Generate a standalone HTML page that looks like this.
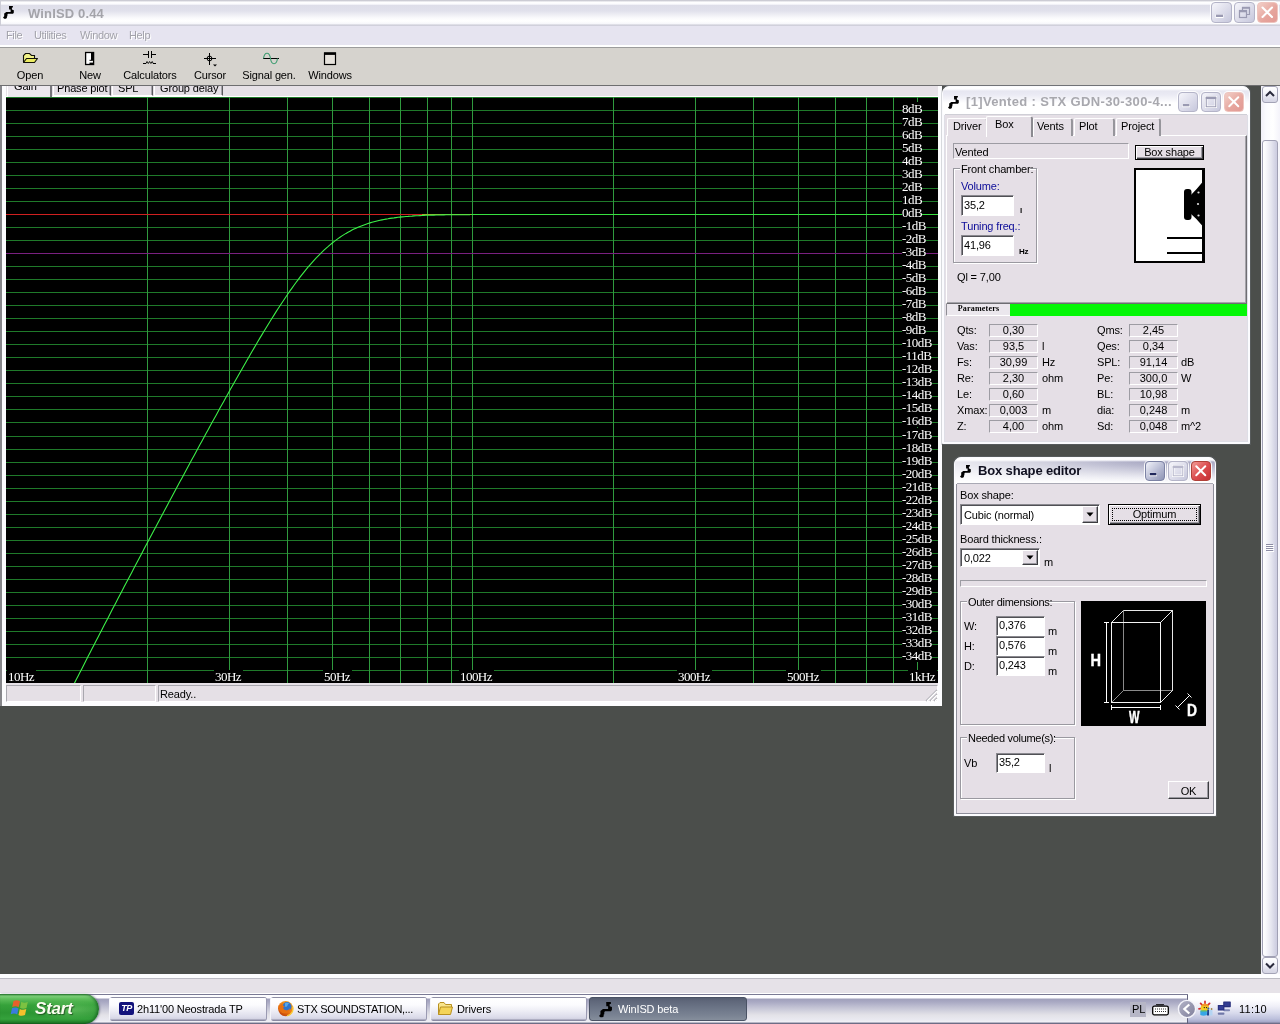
<!DOCTYPE html>
<html><head><meta charset="utf-8"><title>WinISD</title>
<style>
*{box-sizing:border-box;margin:0;padding:0}
html,body{width:1280px;height:1024px;overflow:hidden;background:#4b4e4b;font-family:"Liberation Sans",sans-serif;font-size:11px;color:#000}
#root{position:absolute;left:0;top:0;width:1280px;height:1024px;will-change:transform;transform:translateZ(0)}
.a{position:absolute}
.t{white-space:nowrap;line-height:13px;letter-spacing:-0.15px}
.s{font-family:"Liberation Serif",serif}
.gl{font-size:13px;color:#fff;background:#000;letter-spacing:-0.55px;line-height:13px;height:13px}
</style></head><body><div id="root">
<div class="a " style="left:0px;top:0px;width:1280px;height:26px;border-left:1px solid #cdcdd6;background:linear-gradient(#c4c4cc 0,#d4d4dc 1px,#ffffff 2px,#fbfbfe 4px,#dedee9 5.5px,#e1e1ec 11px,#efeff5 15px,#fafafc 18px,#ffffff 21px,#f6f6fa 24px,#c9c9d4 25px,#d8d7e2 26px)"></div>
<svg class="a" style="left:3px;top:6px" width="11.0" height="13.0" viewBox="0 0 11 13"><path d="M6 0H9.900V1.600H8.900V3.600L10.800 4.200V6.700L10 7.800H5L4.400 8.600V10.200L3.900 10.400V12L2.800 12.800H1.200L0 11.600L1.200 10.200V7.600L3.300 5.900H7.600V3.600H6.100Z" fill="#000"/></svg>
<div class="a t " style="left:28px;top:7px;font-weight:bold;font-size:13px;color:#a4a4aa;letter-spacing:0.15px">WinISD 0.44</div>
<div class="a " style="left:1211px;top:2px;width:21px;height:21px;background:linear-gradient(135deg,#f6f6fb,#dcdcea 55%,#c6c7dc);border:1px solid #b4b4c8;border-radius:4px;box-shadow:0 0 0 1px rgba(255,255,255,.9)"></div>
<svg class="a" style="left:1211px;top:2px" width="21" height="21" viewBox="0 0 21 21"><rect x="4.5" y="12.5" width="8" height="3.5" fill="#fff"/><rect x="5" y="12.6" width="7" height="2.4" fill="#9a9ab2"/></svg>
<div class="a " style="left:1234px;top:2px;width:21px;height:21px;background:linear-gradient(135deg,#f6f6fb,#dcdcea 55%,#c6c7dc);border:1px solid #b4b4c8;border-radius:4px;box-shadow:0 0 0 1px rgba(255,255,255,.9)"></div>
<svg class="a" style="left:1234px;top:2px" width="21" height="21" viewBox="0 0 21 21"><g fill="none" stroke="#9a9ab2" stroke-width="1.2"><path d="M8.5 8.5v-3h7v7h-3" /><path d="M8 5.8h8" stroke-width="2"/><rect x="5.5" y="8.5" width="7" height="7"/><path d="M5 9.3h8" stroke-width="2"/></g></svg>
<div class="a " style="left:1257px;top:2px;width:21px;height:21px;background:linear-gradient(135deg,#f2cfc8,#e6a49c 60%,#e29a94);border:1px solid #eec4be;border-radius:4px;box-shadow:0 0 0 1px rgba(255,255,255,.9)"></div>
<svg class="a" style="left:1257px;top:2px" width="21" height="21" viewBox="0 0 21 21"><path d="M5.5 5.5L15 15M15 5.5L5.5 15" stroke="#fff" stroke-width="2.1" stroke-linecap="round"/></svg>
<div class="a " style="left:0px;top:26px;width:1280px;height:20px;background:#e6e4f0"></div>
<div class="a t " style="left:6px;top:29px;color:#a2a2aa;text-shadow:1px 1px 0 #fff;letter-spacing:-0.35px">File</div>
<div class="a t " style="left:34px;top:29px;color:#a2a2aa;text-shadow:1px 1px 0 #fff;letter-spacing:-0.35px">Utilities</div>
<div class="a t " style="left:80px;top:29px;color:#a2a2aa;text-shadow:1px 1px 0 #fff;letter-spacing:-0.35px">Window</div>
<div class="a t " style="left:129px;top:29px;color:#a2a2aa;text-shadow:1px 1px 0 #fff;letter-spacing:-0.35px">Help</div>
<div class="a " style="left:0px;top:45px;width:1280px;height:2px;background:#fff"></div>
<div class="a " style="left:0px;top:47px;width:1280px;height:1px;background:#9c9c9c"></div>
<div class="a " style="left:0px;top:85px;width:1261px;height:889px;background:#4b4e4b"></div>
<div class="a " style="left:1261px;top:85px;width:19px;height:889px;background:linear-gradient(90deg,#f1f0f8 0,#fbfbfe 5px,#ffffff 12px,#f4f3fa 19px)"></div>
<div class="a " style="left:1262px;top:86px;width:16px;height:17px;background:linear-gradient(#ffffff 0,#f4f4fa 6px,#dcdce9 12px,#d0d0e0 17px);border:1px solid #a3a3b6;border-radius:3px"></div>
<svg class="a" style="left:1262px;top:86px" width="16" height="17" viewBox="0 0 16 17"><path d="M4 10L8 6l4 4" fill="none" stroke="#2a2a3c" stroke-width="2"/></svg>
<div class="a " style="left:1262px;top:957px;width:16px;height:17px;background:linear-gradient(#ffffff 0,#f4f4fa 6px,#dcdce9 12px,#d0d0e0 17px);border:1px solid #a3a3b6;border-radius:3px"></div>
<svg class="a" style="left:1262px;top:957px" width="16" height="17" viewBox="0 0 16 17"><path d="M4 6.500L8 10.500l4-4" fill="none" stroke="#2a2a3c" stroke-width="2"/></svg>
<div class="a " style="left:1262px;top:140px;width:16px;height:817px;background:linear-gradient(90deg,#ffffff 0,#f8f8fc 3px,#e6e6f0 8px,#cfcfe2 13px,#c6c6dc 16px);border:1px solid #a0a0b4;border-radius:3px"></div>
<svg class="a" style="left:1266px;top:544px" width="8" height="8" viewBox="0 0 8 8"><path d="M0 0.500h7M0 2.500h7M0 4.500h7M0 6.500h7" stroke="#8c8ca4" stroke-width="1" shape-rendering="crispEdges"/><path d="M1 1.500h7M1 3.500h7M1 5.500h7M1 7.500h7" stroke="#fff" stroke-width="1" shape-rendering="crispEdges"/></svg>
<div class="a " style="left:0px;top:974px;width:1280px;height:20px;background:#e6e2e8"></div>
<div class="a " style="left:0px;top:974px;width:1280px;height:4px;background:#fdfdff"></div>
<div class="a " style="left:0px;top:978px;width:1280px;height:1px;background:#bcbbc4"></div>
<div class="a " style="left:0px;top:993px;width:1280px;height:1px;background:#f6f6fa"></div>
<div class="a " style="left:0px;top:85px;width:2px;height:621px;background:#86868a"></div>
<div class="a " style="left:2px;top:85px;width:940px;height:621px;background:#fcfcfe"></div>
<div class="a " style="left:6px;top:85px;width:932px;height:617px;background:#e6e1e7"></div>
<div class="a " style="left:6px;top:96px;width:932px;height:1px;background:#fff"></div>
<div class="a " style="left:7px;top:83px;width:45px;height:14px;background:#ece8ee;border-left:1px solid #fff;border-right:2px solid #77777c"></div>
<div class="a t " style="left:14px;top:80px;">Gain</div>
<div class="a " style="left:53px;top:83px;width:58px;height:13px;background:#e5e0e6;border-left:1px solid #fff;border-right:1px solid #5a5a5e;border-bottom:1px solid #fff;box-shadow:inset -1px 0 0 #a5a4aa"></div>
<div class="a t " style="left:57px;top:82px;">Phase plot</div>
<div class="a " style="left:112px;top:83px;width:41px;height:13px;background:#e5e0e6;border-left:1px solid #fff;border-right:1px solid #5a5a5e;border-bottom:1px solid #fff;box-shadow:inset -1px 0 0 #a5a4aa"></div>
<div class="a t " style="left:118px;top:82px;">SPL</div>
<div class="a " style="left:154px;top:83px;width:69px;height:13px;background:#e5e0e6;border-left:1px solid #fff;border-right:1px solid #5a5a5e;border-bottom:1px solid #fff;box-shadow:inset -1px 0 0 #a5a4aa"></div>
<div class="a t " style="left:160px;top:82px;">Group delay</div>
<div class="a " style="left:6px;top:97px;width:932px;height:586px;background:#000"></div>
<div class="a " style="left:6px;top:685px;width:75px;height:17px;background:#e5e0e6;border-top:1px solid #a8a7ae;border-left:1px solid #a8a7ae;border-right:1px solid #fff;border-bottom:1px solid #fff"></div>
<div class="a " style="left:83px;top:685px;width:73px;height:17px;background:#e5e0e6;border-top:1px solid #a8a7ae;border-left:1px solid #a8a7ae;border-right:1px solid #fff;border-bottom:1px solid #fff"></div>
<div class="a " style="left:158px;top:685px;width:780px;height:17px;background:#e5e0e6;border-top:1px solid #a8a7ae;border-left:1px solid #a8a7ae;border-right:1px solid #fff;border-bottom:1px solid #fff"></div>
<div class="a t " style="left:160px;top:688px;">Ready..</div>
<svg class="a" style="left:924px;top:688px" width="14" height="14" viewBox="0 0 14 14"><g stroke-width="1.2"><path d="M13 2L2 13M13 6L6 13M13 10L10 13" stroke="#a0a0a8"/><path d="M13 3L3 13M13 7L7 13M13 11L11 13" stroke="#fff"/></g></svg>
<svg class="a" style="left:0;top:0" width="1280" height="700" viewBox="0 0 1280 700"><g shape-rendering="crispEdges" stroke-width="1"><line x1="6" x2="938" y1="97.5" y2="97.5" stroke="#1f7a2a"/><line x1="6" x2="938" y1="110.5" y2="110.5" stroke="#1f7a2a"/><line x1="6" x2="938" y1="123.5" y2="123.5" stroke="#1f7a2a"/><line x1="6" x2="938" y1="136.5" y2="136.5" stroke="#1f7a2a"/><line x1="6" x2="938" y1="149.5" y2="149.5" stroke="#1f7a2a"/><line x1="6" x2="938" y1="162.5" y2="162.5" stroke="#1f7a2a"/><line x1="6" x2="938" y1="175.5" y2="175.5" stroke="#1f7a2a"/><line x1="6" x2="938" y1="188.5" y2="188.5" stroke="#1f7a2a"/><line x1="6" x2="938" y1="201.5" y2="201.5" stroke="#1f7a2a"/><line x1="6" x2="938" y1="214.5" y2="214.5" stroke="#1f7a2a"/><line x1="6" x2="938" y1="227.5" y2="227.5" stroke="#1f7a2a"/><line x1="6" x2="938" y1="240.5" y2="240.5" stroke="#1f7a2a"/><line x1="6" x2="938" y1="253.5" y2="253.5" stroke="#1f7a2a"/><line x1="6" x2="938" y1="266.5" y2="266.5" stroke="#1f7a2a"/><line x1="6" x2="938" y1="279.5" y2="279.5" stroke="#1f7a2a"/><line x1="6" x2="938" y1="292.5" y2="292.5" stroke="#1f7a2a"/><line x1="6" x2="938" y1="305.5" y2="305.5" stroke="#1f7a2a"/><line x1="6" x2="938" y1="318.5" y2="318.5" stroke="#1f7a2a"/><line x1="6" x2="938" y1="331.5" y2="331.5" stroke="#1f7a2a"/><line x1="6" x2="938" y1="344.5" y2="344.5" stroke="#1f7a2a"/><line x1="6" x2="938" y1="357.5" y2="357.5" stroke="#1f7a2a"/><line x1="6" x2="938" y1="370.5" y2="370.5" stroke="#1f7a2a"/><line x1="6" x2="938" y1="383.5" y2="383.5" stroke="#1f7a2a"/><line x1="6" x2="938" y1="396.5" y2="396.5" stroke="#1f7a2a"/><line x1="6" x2="938" y1="409.5" y2="409.5" stroke="#1f7a2a"/><line x1="6" x2="938" y1="422.5" y2="422.5" stroke="#1f7a2a"/><line x1="6" x2="938" y1="436.5" y2="436.5" stroke="#1f7a2a"/><line x1="6" x2="938" y1="449.5" y2="449.5" stroke="#1f7a2a"/><line x1="6" x2="938" y1="462.5" y2="462.5" stroke="#1f7a2a"/><line x1="6" x2="938" y1="475.5" y2="475.5" stroke="#1f7a2a"/><line x1="6" x2="938" y1="488.5" y2="488.5" stroke="#1f7a2a"/><line x1="6" x2="938" y1="501.5" y2="501.5" stroke="#1f7a2a"/><line x1="6" x2="938" y1="514.5" y2="514.5" stroke="#1f7a2a"/><line x1="6" x2="938" y1="527.5" y2="527.5" stroke="#1f7a2a"/><line x1="6" x2="938" y1="540.5" y2="540.5" stroke="#1f7a2a"/><line x1="6" x2="938" y1="553.5" y2="553.5" stroke="#1f7a2a"/><line x1="6" x2="938" y1="566.5" y2="566.5" stroke="#1f7a2a"/><line x1="6" x2="938" y1="579.5" y2="579.5" stroke="#1f7a2a"/><line x1="6" x2="938" y1="592.5" y2="592.5" stroke="#1f7a2a"/><line x1="6" x2="938" y1="605.5" y2="605.5" stroke="#1f7a2a"/><line x1="6" x2="938" y1="618.5" y2="618.5" stroke="#1f7a2a"/><line x1="6" x2="938" y1="631.5" y2="631.5" stroke="#1f7a2a"/><line x1="6" x2="938" y1="644.5" y2="644.5" stroke="#1f7a2a"/><line x1="6" x2="938" y1="657.5" y2="657.5" stroke="#1f7a2a"/><line x1="6" x2="938" y1="670.5" y2="670.5" stroke="#1f7a2a"/><line x1="147.5" x2="147.5" y1="97" y2="683" stroke="#2f9a3e"/><line x1="229.5" x2="229.5" y1="97" y2="683" stroke="#2f9a3e"/><line x1="287.5" x2="287.5" y1="97" y2="683" stroke="#2f9a3e"/><line x1="332.5" x2="332.5" y1="97" y2="683" stroke="#2f9a3e"/><line x1="369.5" x2="369.5" y1="97" y2="683" stroke="#2f9a3e"/><line x1="400.5" x2="400.5" y1="97" y2="683" stroke="#2f9a3e"/><line x1="427.5" x2="427.5" y1="97" y2="683" stroke="#2f9a3e"/><line x1="451.5" x2="451.5" y1="97" y2="683" stroke="#2f9a3e"/><line x1="472.5" x2="472.5" y1="97" y2="683" stroke="#2f9a3e"/><line x1="613.5" x2="613.5" y1="97" y2="683" stroke="#2f9a3e"/><line x1="695.5" x2="695.5" y1="97" y2="683" stroke="#2f9a3e"/><line x1="753.5" x2="753.5" y1="97" y2="683" stroke="#2f9a3e"/><line x1="798.5" x2="798.5" y1="97" y2="683" stroke="#2f9a3e"/><line x1="835.5" x2="835.5" y1="97" y2="683" stroke="#2f9a3e"/><line x1="866.5" x2="866.5" y1="97" y2="683" stroke="#2f9a3e"/><line x1="893.5" x2="893.5" y1="97" y2="683" stroke="#2f9a3e"/><line x1="917.5" x2="917.5" y1="97" y2="683" stroke="#2f9a3e"/><line x1="6" x2="938" y1="253.5" y2="253.5" stroke="#7a2080"/><line x1="6" x2="422" y1="214.5" y2="214.5" stroke="#d02020"/><line x1="422" x2="471" y1="214.5" y2="214.5" stroke="#b0a828"/><line x1="471" x2="938" y1="214.5" y2="214.5" stroke="#38e040"/></g><clipPath id="pc"><rect x="6" y="97" width="932" height="586"/></clipPath><polyline clip-path="url(#pc)" fill="none" stroke="#3cf048" stroke-width="1.1" points="66.0,699.8 68.0,695.9 70.0,692.0 72.0,688.0 74.0,684.1 76.0,680.1 78.0,676.2 80.0,672.3 82.0,668.4 84.0,664.5 86.0,660.5 88.0,656.6 90.0,652.7 92.0,648.8 94.0,645.0 96.0,641.1 98.0,637.2 100.0,633.3 102.0,629.4 104.0,625.6 106.0,621.7 108.0,617.9 110.0,614.0 112.0,610.1 114.0,606.3 116.0,602.5 118.0,598.6 120.0,594.8 122.0,591.0 124.0,587.1 126.0,583.3 128.0,579.5 130.0,575.7 132.0,571.9 134.0,568.1 136.0,564.3 138.0,560.5 140.0,556.7 142.0,552.9 144.0,549.1 146.0,545.3 148.0,541.5 150.0,537.8 152.0,534.0 154.0,530.2 156.0,526.5 158.0,522.7 160.0,518.9 162.0,515.2 164.0,511.4 166.0,507.7 168.0,504.0 170.0,500.2 172.0,496.5 174.0,492.8 176.0,489.0 178.0,485.3 180.0,481.6 182.0,477.9 184.0,474.2 186.0,470.4 188.0,466.7 190.0,463.0 192.0,459.3 194.0,455.7 196.0,452.0 198.0,448.3 200.0,444.6 202.0,440.9 204.0,437.3 206.0,433.6 208.0,429.9 210.0,426.3 212.0,422.6 214.0,419.0 216.0,415.4 218.0,411.7 220.0,408.1 222.0,404.5 224.0,400.9 226.0,397.3 228.0,393.7 230.0,390.1 232.0,386.6 234.0,383.0 236.0,379.4 238.0,375.9 240.0,372.4 242.0,368.9 244.0,365.4 246.0,361.9 248.0,358.4 250.0,354.9 252.0,351.5 254.0,348.1 256.0,344.7 258.0,341.3 260.0,337.9 262.0,334.6 264.0,331.3 266.0,328.0 268.0,324.7 270.0,321.5 272.0,318.2 274.0,315.1 276.0,311.9 278.0,308.8 280.0,305.7 282.0,302.7 284.0,299.7 286.0,296.7 288.0,293.8 290.0,290.9 292.0,288.1 294.0,285.3 296.0,282.5 298.0,279.9 300.0,277.2 302.0,274.6 304.0,272.1 306.0,269.6 308.0,267.2 310.0,264.9 312.0,262.6 314.0,260.4 316.0,258.2 318.0,256.1 320.0,254.1 322.0,252.1 324.0,250.2 326.0,248.3 328.0,246.6 330.0,244.8 332.0,243.2 334.0,241.6 336.0,240.1 338.0,238.6 340.0,237.2 342.0,235.9 344.0,234.6 346.0,233.4 348.0,232.3 350.0,231.2 352.0,230.1 354.0,229.1 356.0,228.2 358.0,227.3 360.0,226.5 362.0,225.7 364.0,224.9 366.0,224.2 368.0,223.5 370.0,222.9 372.0,222.3 374.0,221.8 376.0,221.3 378.0,220.8 380.0,220.3 382.0,219.9 384.0,219.5 386.0,219.1 388.0,218.8 390.0,218.4 392.0,218.1 394.0,217.9 396.0,217.6 398.0,217.3 400.0,217.1 402.0,216.9 404.0,216.7 406.0,216.5 408.0,216.4 410.0,216.2 412.0,216.1 414.0,215.9 416.0,215.8 418.0,215.7 420.0,215.6 422.0,215.5 424.0,215.4 426.0,215.3 428.0,215.3 430.0,215.2 432.0,215.1 434.0,215.1 436.0,215.0 438.0,215.0 440.0,215.0 442.0,214.9 444.0,214.9 446.0,214.8 448.0,214.8 450.0,214.8 452.0,214.8 454.0,214.8 456.0,214.7 458.0,214.7 460.0,214.7 462.0,214.7 464.0,214.7 466.0,214.7 468.0,214.7 470.0,214.7"/></svg>
<div class="a t s gl" style="left:902px;top:102px">8dB</div>
<div class="a t s gl" style="left:902px;top:115px">7dB</div>
<div class="a t s gl" style="left:902px;top:128px">6dB</div>
<div class="a t s gl" style="left:902px;top:141px">5dB</div>
<div class="a t s gl" style="left:902px;top:154px">4dB</div>
<div class="a t s gl" style="left:902px;top:167px">3dB</div>
<div class="a t s gl" style="left:902px;top:180px">2dB</div>
<div class="a t s gl" style="left:902px;top:193px">1dB</div>
<div class="a t s gl" style="left:902px;top:206px">0dB</div>
<div class="a t s gl" style="left:902px;top:219px">-1dB</div>
<div class="a t s gl" style="left:902px;top:232px">-2dB</div>
<div class="a t s gl" style="left:902px;top:245px">-3dB</div>
<div class="a t s gl" style="left:902px;top:258px">-4dB</div>
<div class="a t s gl" style="left:902px;top:271px">-5dB</div>
<div class="a t s gl" style="left:902px;top:284px">-6dB</div>
<div class="a t s gl" style="left:902px;top:297px">-7dB</div>
<div class="a t s gl" style="left:902px;top:310px">-8dB</div>
<div class="a t s gl" style="left:902px;top:323px">-9dB</div>
<div class="a t s gl" style="left:902px;top:336px">-10dB</div>
<div class="a t s gl" style="left:902px;top:349px">-11dB</div>
<div class="a t s gl" style="left:902px;top:362px">-12dB</div>
<div class="a t s gl" style="left:902px;top:375px">-13dB</div>
<div class="a t s gl" style="left:902px;top:388px">-14dB</div>
<div class="a t s gl" style="left:902px;top:401px">-15dB</div>
<div class="a t s gl" style="left:902px;top:414px">-16dB</div>
<div class="a t s gl" style="left:902px;top:428px">-17dB</div>
<div class="a t s gl" style="left:902px;top:441px">-18dB</div>
<div class="a t s gl" style="left:902px;top:454px">-19dB</div>
<div class="a t s gl" style="left:902px;top:467px">-20dB</div>
<div class="a t s gl" style="left:902px;top:480px">-21dB</div>
<div class="a t s gl" style="left:902px;top:493px">-22dB</div>
<div class="a t s gl" style="left:902px;top:506px">-23dB</div>
<div class="a t s gl" style="left:902px;top:519px">-24dB</div>
<div class="a t s gl" style="left:902px;top:532px">-25dB</div>
<div class="a t s gl" style="left:902px;top:545px">-26dB</div>
<div class="a t s gl" style="left:902px;top:558px">-27dB</div>
<div class="a t s gl" style="left:902px;top:571px">-28dB</div>
<div class="a t s gl" style="left:902px;top:584px">-29dB</div>
<div class="a t s gl" style="left:902px;top:597px">-30dB</div>
<div class="a t s gl" style="left:902px;top:610px">-31dB</div>
<div class="a t s gl" style="left:902px;top:623px">-32dB</div>
<div class="a t s gl" style="left:902px;top:636px">-33dB</div>
<div class="a t s gl" style="left:902px;top:649px">-34dB</div>
<div class="a t s gl" style="left:7px;top:670px;width:29px;height:13px;padding-left:1px">10Hz</div>
<div class="a t s gl" style="left:214px;top:670px;width:29px;height:13px;padding-left:1px">30Hz</div>
<div class="a t s gl" style="left:323px;top:670px;width:29px;height:13px;padding-left:1px">50Hz</div>
<div class="a t s gl" style="left:459px;top:670px;width:35px;height:13px;padding-left:1px">100Hz</div>
<div class="a t s gl" style="left:677px;top:670px;width:35px;height:13px;padding-left:1px">300Hz</div>
<div class="a t s gl" style="left:786px;top:670px;width:35px;height:13px;padding-left:1px">500Hz</div>
<div class="a t s gl" style="left:908px;top:670px;width:29px;height:13px;padding-left:1px">1kHz</div>
<div class="a " style="left:0px;top:48px;width:1280px;height:37px;background:#d6d3ce"></div>
<div class="a " style="left:0px;top:85px;width:1280px;height:1px;background:#6e6e70"></div>
<div class="a t" style="left:-10px;top:69px;width:80px;text-align:center">Open</div>
<div class="a t" style="left:50px;top:69px;width:80px;text-align:center">New</div>
<div class="a t" style="left:110px;top:69px;width:80px;text-align:center">Calculators</div>
<div class="a t" style="left:170px;top:69px;width:80px;text-align:center">Cursor</div>
<div class="a t" style="left:229px;top:69px;width:80px;text-align:center">Signal gen.</div>
<div class="a t" style="left:290px;top:69px;width:80px;text-align:center">Windows</div>
<svg class="a" style="left:0;top:48px" width="360" height="24" viewBox="0 0 360 24"><path d="M23.500 14V7.500L25.500 5.500H29.500L31.500 7.500H34.500V10.500" fill="#f2f288" stroke="#101008" stroke-width="1.100"/><path d="M23.500 14.500L26.500 10.500H37.500L34.500 14.500Z" fill="#ecec62" stroke="#101008" stroke-width="1.100" stroke-linejoin="round"/><rect x="85.600" y="4.500" width="8" height="12" fill="#fff" stroke="#000" stroke-width="1.300"/><rect x="91" y="4.500" width="3" height="8.300" fill="#000"/><rect x="89.500" y="14.600" width="4.500" height="2" fill="#000"/><rect x="89.500" y="11.800" width="2" height="1" fill="#000"/><g stroke="#000" stroke-width="1" fill="none" shape-rendering="crispEdges"><path d="M143 6.500h5M151 6.500h5M148.500 3v7M151.500 3v7"/><path d="M143 15.500h3M153 15.500h3"/></g><path d="M146 15.500l1-2 1.300 2 1.300-2 1.300 2 1.300-2 1 2" stroke="#000" stroke-width="0.9" fill="none"/><g stroke="#000" stroke-width="1" fill="none"><path d="M203.500 10.500h12M209.500 4.500v12" shape-rendering="crispEdges"/><circle cx="209.500" cy="10.500" r="2.400"/></g><path d="M213 16.500h4l-2 2z" fill="#000"/><path d="M263 10.500h15.500" stroke="#000" stroke-width="1" shape-rendering="crispEdges"/><path d="M263.500 10.500c1-7 6-7 7 0c1 7 6 7 7 0" fill="none" stroke="#3c9c70" stroke-width="1.100"/><rect x="324.500" y="5" width="11" height="11.500" fill="#e6e2dc" stroke="#000" stroke-width="1.200"/><rect x="324" y="4.500" width="12" height="2.400" fill="#000"/></svg>
<div class="a " style="left:942px;top:86px;width:308px;height:358px;background:#fbfbfe;border:1px solid #fbfbfe;border-radius:7px 7px 0 0;box-shadow:0 0 0 1px rgba(120,124,135,.28)"></div>
<div class="a " style="left:943px;top:87px;width:306px;height:27px;background:linear-gradient(#ffffff 0,#fdfdff 2px,#e7e7f1 4px,#e9e9f3 7px,#f4f4f9 12px,#ffffff 16px,#ffffff 100%);border-radius:6px 6px 0 0"></div>
<div class="a " style="left:945px;top:114px;width:302px;height:1px;background:#cfcfd6"></div>
<div class="a " style="left:944px;top:115px;width:304px;height:327px;background:#e5dfe6;border:1px solid #dedee6;border-top:none"></div>
<svg class="a" style="left:948px;top:96px" width="11.0" height="13.0" viewBox="0 0 11 13"><path d="M6 0H9.900V1.600H8.900V3.600L10.800 4.200V6.700L10 7.800H5L4.400 8.600V10.200L3.900 10.400V12L2.800 12.800H1.200L0 11.600L1.200 10.200V7.600L3.300 5.900H7.600V3.600H6.100Z" fill="#000"/></svg>
<div class="a t " style="left:966px;top:95px;font-weight:bold;font-size:13px;color:#a8a8ae;letter-spacing:0.35px;">[1]Vented : STX GDN-30-300-4...</div>
<div class="a " style="left:1178px;top:92px;width:20px;height:20px;background:linear-gradient(135deg,#f6f6fb,#dcdcea 55%,#c6c7dc);border:1px solid #b4b4c8;border-radius:4px;box-shadow:0 0 0 1px rgba(255,255,255,.9)"></div>
<svg class="a" style="left:1178px;top:92px" width="20" height="20" viewBox="0 0 21 21"><rect x="4.5" y="12.5" width="8" height="3.5" fill="#fff"/><rect x="5" y="12.6" width="7" height="2.4" fill="#9a9ab2"/></svg>
<div class="a " style="left:1201px;top:92px;width:20px;height:20px;background:linear-gradient(135deg,#f6f6fb,#dcdcea 55%,#c6c7dc);border:1px solid #b4b4c8;border-radius:4px;box-shadow:0 0 0 1px rgba(255,255,255,.9)"></div>
<svg class="a" style="left:1201px;top:92px" width="20" height="20" viewBox="0 0 21 21"><rect x="5.5" y="5.5" width="10" height="10" fill="none" stroke="#fff" stroke-width="2.6"/><path d="M5.5 5.5h10v10h-10z" fill="none" stroke="#9a9ab2" stroke-width="1.1"/><rect x="5" y="5" width="11" height="2.4" fill="#9a9ab2"/></svg>
<div class="a " style="left:1224px;top:92px;width:20px;height:20px;background:linear-gradient(135deg,#f2cfc8,#e6a49c 60%,#e29a94);border:1px solid #eec4be;border-radius:4px;box-shadow:0 0 0 1px rgba(255,255,255,.9)"></div>
<svg class="a" style="left:1224px;top:92px" width="20" height="20" viewBox="0 0 21 21"><path d="M5.5 5.5L15 15M15 5.5L5.5 15" stroke="#fff" stroke-width="2.1" stroke-linecap="round"/></svg>
<div class="a " style="left:946px;top:135px;width:301px;height:169px;background:#e5dfe6;border:1px solid;border-color:#fff #6e6d72 #6e6d72 #fff;box-shadow:inset -1px -1px 0 #a5a4aa"></div>
<div class="a " style="left:947px;top:118px;width:41px;height:18px;background:#e5dfe6;border-top:1px solid #fff;border-left:1px solid #fff;border-right:2px solid #96959b;border-radius:2px 3px 0 0"></div>
<div class="a t " style="left:953px;top:120px;">Driver</div>
<div class="a " style="left:1033px;top:118px;width:40px;height:18px;background:#e5dfe6;border-top:1px solid #fff;border-left:1px solid #fff;border-right:2px solid #96959b;border-radius:2px 3px 0 0"></div>
<div class="a t " style="left:1037px;top:120px;">Vents</div>
<div class="a " style="left:1074px;top:118px;width:41px;height:18px;background:#e5dfe6;border-top:1px solid #fff;border-left:1px solid #fff;border-right:2px solid #96959b;border-radius:2px 3px 0 0"></div>
<div class="a t " style="left:1079px;top:120px;">Plot</div>
<div class="a " style="left:1116px;top:118px;width:45px;height:18px;background:#e5dfe6;border-top:1px solid #fff;border-left:1px solid #fff;border-right:2px solid #96959b;border-radius:2px 3px 0 0"></div>
<div class="a t " style="left:1121px;top:120px;">Project</div>
<div class="a " style="left:986px;top:116px;width:47px;height:21px;background:#e5dfe6;border-top:1px solid #fff;border-left:1px solid #fff;border-right:2px solid #8b8a90;border-radius:2px 3px 0 0"></div>
<div class="a t " style="left:995px;top:118px;">Box</div>
<div class="a " style="left:989px;top:135px;width:42px;height:2px;background:#e5dfe6"></div>
<div class="a " style="left:953px;top:143px;width:176px;height:16px;background:#e5dfe6;border:1px solid;border-color:#9d9ca3 #fff #fff #9d9ca3"></div>
<div class="a t " style="left:955px;top:146px;">Vented</div>
<div class="a " style="left:1135px;top:145px;width:69px;height:15px;background:#e5dfe6;border:1px solid #000;box-shadow:inset 1px 1px 0 #fff,inset -1px -1px 0 #3c3c40,inset -2px -2px 0 #9a99a0"></div>
<div class="a t" style="left:1135px;top:145px;width:69px;height:15px;line-height:14px;text-align:center">Box shape</div>
<div class="a " style="left:954px;top:169px;width:84px;height:95px;border:1px solid #fff"></div>
<div class="a " style="left:953px;top:168px;width:84px;height:95px;border:1px solid #9a99a0"></div>
<div class="a " style="left:960px;top:163px;width:70px;height:12px;background:#e5dfe6"></div>
<div class="a t " style="left:961px;top:163px;letter-spacing:-0.15px">Front chamber:</div>
<div class="a t " style="left:961px;top:180px;color:#0c0c98">Volume:</div>
<div class="a " style="left:961px;top:195px;width:53px;height:21px;background:#fff;border:1px solid;border-color:#8a898f #fff #fff #8a898f;box-shadow:inset 1px 1px 0 #505055;"><div class="t" style="padding:3px 0 0 2px">35,2</div></div>
<div class="a t " style="left:1020px;top:204px;font-size:8px;font-weight:bold">l</div>
<div class="a t " style="left:961px;top:220px;color:#0c0c98">Tuning freq.:</div>
<div class="a " style="left:961px;top:235px;width:53px;height:21px;background:#fff;border:1px solid;border-color:#8a898f #fff #fff #8a898f;box-shadow:inset 1px 1px 0 #505055;"><div class="t" style="padding:3px 0 0 2px">41,96</div></div>
<div class="a t " style="left:1019px;top:245px;font-size:8px;font-weight:bold;letter-spacing:-0.3px">Hz</div>
<div class="a t " style="left:957px;top:271px;">Ql = 7,00</div>
<div class="a " style="left:1134px;top:168px;width:71px;height:95px;background:#fff;border:2px solid #000"></div>
<svg class="a" style="left:1133px;top:167px" width="72" height="96" viewBox="0 0 72 96" overflow="hidden"><rect x="51" y="22" width="7.5" height="31" rx="3" fill="#000"/><path d="M57 29 Q64 22 70 14.500 L70 59.500 Q64 52 57 46 Z" fill="#000"/><circle cx="65.5" cy="25.5" r="1.1" fill="#ddd"/><circle cx="65" cy="37" r="1.1" fill="#ddd"/><circle cx="65.5" cy="48.5" r="1.1" fill="#ddd"/><path d="M34 71H70M34 86H70" stroke="#000" stroke-width="2"/><rect x="69" y="1" width="3" height="95" fill="#000"/></svg>
<div class="a " style="left:946px;top:304px;width:64px;height:12px;background:#ebe7ed;border-left:1px solid #8e8d94;border-bottom:1px solid #fff"><div class="t s" style="font-size:8px;font-weight:bold;text-align:center;line-height:10px;letter-spacing:0.2px">Parameters</div></div>
<div class="a " style="left:1010px;top:304px;width:237px;height:12px;background:#04f606"></div>
<div class="a t " style="left:957px;top:324px;">Qts:</div>
<div class="a " style="left:989px;top:324px;width:49px;height:13px;background:#e5dfe6;border:1px solid;border-color:#9d9ca3 #fff #fff #9d9ca3;text-align:center;line-height:11px;white-space:nowrap">0,30</div>
<div class="a t " style="left:1042px;top:324px;"></div>
<div class="a t " style="left:1097px;top:324px;">Qms:</div>
<div class="a " style="left:1129px;top:324px;width:49px;height:13px;background:#e5dfe6;border:1px solid;border-color:#9d9ca3 #fff #fff #9d9ca3;text-align:center;line-height:11px;white-space:nowrap">2,45</div>
<div class="a t " style="left:1181px;top:324px;"></div>
<div class="a t " style="left:957px;top:340px;">Vas:</div>
<div class="a " style="left:989px;top:340px;width:49px;height:13px;background:#e5dfe6;border:1px solid;border-color:#9d9ca3 #fff #fff #9d9ca3;text-align:center;line-height:11px;white-space:nowrap">93,5</div>
<div class="a t " style="left:1042px;top:340px;">l</div>
<div class="a t " style="left:1097px;top:340px;">Qes:</div>
<div class="a " style="left:1129px;top:340px;width:49px;height:13px;background:#e5dfe6;border:1px solid;border-color:#9d9ca3 #fff #fff #9d9ca3;text-align:center;line-height:11px;white-space:nowrap">0,34</div>
<div class="a t " style="left:1181px;top:340px;"></div>
<div class="a t " style="left:957px;top:356px;">Fs:</div>
<div class="a " style="left:989px;top:356px;width:49px;height:13px;background:#e5dfe6;border:1px solid;border-color:#9d9ca3 #fff #fff #9d9ca3;text-align:center;line-height:11px;white-space:nowrap">30,99</div>
<div class="a t " style="left:1042px;top:356px;">Hz</div>
<div class="a t " style="left:1097px;top:356px;">SPL:</div>
<div class="a " style="left:1129px;top:356px;width:49px;height:13px;background:#e5dfe6;border:1px solid;border-color:#9d9ca3 #fff #fff #9d9ca3;text-align:center;line-height:11px;white-space:nowrap">91,14</div>
<div class="a t " style="left:1181px;top:356px;">dB</div>
<div class="a t " style="left:957px;top:372px;">Re:</div>
<div class="a " style="left:989px;top:372px;width:49px;height:13px;background:#e5dfe6;border:1px solid;border-color:#9d9ca3 #fff #fff #9d9ca3;text-align:center;line-height:11px;white-space:nowrap">2,30</div>
<div class="a t " style="left:1042px;top:372px;">ohm</div>
<div class="a t " style="left:1097px;top:372px;">Pe:</div>
<div class="a " style="left:1129px;top:372px;width:49px;height:13px;background:#e5dfe6;border:1px solid;border-color:#9d9ca3 #fff #fff #9d9ca3;text-align:center;line-height:11px;white-space:nowrap">300,0</div>
<div class="a t " style="left:1181px;top:372px;">W</div>
<div class="a t " style="left:957px;top:388px;">Le:</div>
<div class="a " style="left:989px;top:388px;width:49px;height:13px;background:#e5dfe6;border:1px solid;border-color:#9d9ca3 #fff #fff #9d9ca3;text-align:center;line-height:11px;white-space:nowrap">0,60</div>
<div class="a t " style="left:1042px;top:388px;"></div>
<div class="a t " style="left:1097px;top:388px;">BL:</div>
<div class="a " style="left:1129px;top:388px;width:49px;height:13px;background:#e5dfe6;border:1px solid;border-color:#9d9ca3 #fff #fff #9d9ca3;text-align:center;line-height:11px;white-space:nowrap">10,98</div>
<div class="a t " style="left:1181px;top:388px;"></div>
<div class="a t " style="left:957px;top:404px;">Xmax:</div>
<div class="a " style="left:989px;top:404px;width:49px;height:13px;background:#e5dfe6;border:1px solid;border-color:#9d9ca3 #fff #fff #9d9ca3;text-align:center;line-height:11px;white-space:nowrap">0,003</div>
<div class="a t " style="left:1042px;top:404px;">m</div>
<div class="a t " style="left:1097px;top:404px;">dia:</div>
<div class="a " style="left:1129px;top:404px;width:49px;height:13px;background:#e5dfe6;border:1px solid;border-color:#9d9ca3 #fff #fff #9d9ca3;text-align:center;line-height:11px;white-space:nowrap">0,248</div>
<div class="a t " style="left:1181px;top:404px;">m</div>
<div class="a t " style="left:957px;top:420px;">Z:</div>
<div class="a " style="left:989px;top:420px;width:49px;height:13px;background:#e5dfe6;border:1px solid;border-color:#9d9ca3 #fff #fff #9d9ca3;text-align:center;line-height:11px;white-space:nowrap">4,00</div>
<div class="a t " style="left:1042px;top:420px;">ohm</div>
<div class="a t " style="left:1097px;top:420px;">Sd:</div>
<div class="a " style="left:1129px;top:420px;width:49px;height:13px;background:#e5dfe6;border:1px solid;border-color:#9d9ca3 #fff #fff #9d9ca3;text-align:center;line-height:11px;white-space:nowrap">0,048</div>
<div class="a t " style="left:1181px;top:420px;">m^2</div>
<div class="a " style="left:954px;top:457px;width:262px;height:359px;background:#fdfdff;border:1px solid #fbfbfe;border-radius:7px 7px 0 0;box-shadow:0 0 0 1px rgba(120,124,135,.28)"></div>
<div class="a " style="left:955px;top:458px;width:260px;height:25px;background:linear-gradient(90deg,rgba(255,255,255,.75) 0,rgba(255,255,255,.45) 35%,rgba(255,255,255,0) 75%),linear-gradient(#ffffff 0,#fbfbfe 2px,#a9a9c3 4px,#b2b2ca 7px,#cdcddd 13px,#e9e9f1 19px,#f8f8fb 23px,#ffffff 100%);border-radius:6px 6px 0 0"></div>
<div class="a " style="left:957px;top:483px;width:256px;height:1px;background:#a9a9b4"></div>
<div class="a " style="left:956px;top:484px;width:258px;height:330px;background:#e5dfe6;border:1px solid #8e8e9a;border-top:none"></div>
<svg class="a" style="left:960px;top:465px" width="11.0" height="13.0" viewBox="0 0 11 13"><path d="M6 0H9.900V1.600H8.900V3.600L10.800 4.200V6.700L10 7.800H5L4.400 8.600V10.200L3.900 10.400V12L2.800 12.800H1.200L0 11.600L1.200 10.200V7.600L3.300 5.900H7.600V3.600H6.100Z" fill="#000"/></svg>
<div class="a t " style="left:978px;top:464px;font-weight:bold;font-size:13px;color:#101020;letter-spacing:-0.14px;">Box shape editor</div>
<div class="a " style="left:1145px;top:461px;width:20px;height:20px;background:linear-gradient(135deg,#f2f3fa,#b8bcd4 55%,#8e94b4);border:1px solid #7c82a4;border-radius:4px;box-shadow:0 0 0 1px rgba(255,255,255,.9)"></div>
<svg class="a" style="left:1145px;top:461px" width="20" height="20" viewBox="0 0 21 21"><rect x="4.5" y="12.5" width="8" height="3.5" fill="#fff"/><rect x="5" y="12.6" width="7" height="2.4" fill="#20285c"/></svg>
<div class="a " style="left:1168px;top:461px;width:20px;height:20px;background:linear-gradient(135deg,#f6f6fb,#dcdcea 55%,#c6c7dc);border:1px solid #b4b4c8;border-radius:4px;box-shadow:0 0 0 1px rgba(255,255,255,.9)"></div>
<svg class="a" style="left:1168px;top:461px" width="20" height="20" viewBox="0 0 21 21"><rect x="5.5" y="5.5" width="10" height="10" fill="none" stroke="#fff" stroke-width="2.6"/><path d="M5.5 5.5h10v10h-10z" fill="none" stroke="#b8b8cc" stroke-width="1.1"/><rect x="5" y="5" width="11" height="2.4" fill="#b8b8cc"/></svg>
<div class="a " style="left:1191px;top:461px;width:20px;height:20px;background:linear-gradient(135deg,#f29c96,#dc4e50 50%,#c62e34);border:1px solid #b04038;border-radius:4px;box-shadow:0 0 0 1px rgba(255,255,255,.9)"></div>
<svg class="a" style="left:1191px;top:461px" width="20" height="20" viewBox="0 0 21 21"><path d="M5.5 5.5L15 15M15 5.5L5.5 15" stroke="#fff" stroke-width="2.1" stroke-linecap="round"/></svg>
<div class="a t " style="left:960px;top:489px;">Box shape:</div>
<div class="a " style="left:960px;top:504px;width:140px;height:21px;background:#fff;border:1px solid;border-color:#8a898f #fff #fff #8a898f;box-shadow:inset 1px 1px 0 #505055;"><div class="t" style="padding:4px 0 0 3px">Cubic (normal)</div></div>
<div class="a " style="left:1082px;top:506px;width:16px;height:17px;background:#e5dfe6;border:1px solid;border-color:#fff #3c3c40 #3c3c40 #fff;box-shadow:inset -1px -1px 0 #9a99a0"></div>
<svg class="a" style="left:1086px;top:512px" width="8" height="5" viewBox="0 0 8 5"><path d="M0.5 0.5h7L4 4.5z" fill="#000"/></svg>
<div class="a " style="left:1108px;top:504px;width:93px;height:21px;background:#e5dfe6;border:1px solid #000;box-shadow:inset 1px 1px 0 #fff,inset -1px -1px 0 #3c3c40,inset -2px -2px 0 #9a99a0"></div>
<div class="a " style="left:1112px;top:508px;width:85px;height:13px;border:1px dotted #000"></div>
<div class="a t" style="left:1108px;top:504px;width:93px;height:21px;line-height:20px;text-align:center">Optimum</div>
<div class="a t " style="left:960px;top:533px;">Board thickness.:</div>
<div class="a " style="left:960px;top:548px;width:80px;height:19px;background:#fff;border:1px solid;border-color:#8a898f #fff #fff #8a898f;box-shadow:inset 1px 1px 0 #505055;"><div class="t" style="padding:3px 0 0 3px">0,022</div></div>
<div class="a " style="left:1022px;top:550px;width:16px;height:15px;background:#e5dfe6;border:1px solid;border-color:#fff #3c3c40 #3c3c40 #fff;box-shadow:inset -1px -1px 0 #9a99a0"></div>
<svg class="a" style="left:1026px;top:555px" width="8" height="5" viewBox="0 0 8 5"><path d="M0.5 0.5h7L4 4.5z" fill="#000"/></svg>
<div class="a t " style="left:1044px;top:556px;">m</div>
<div class="a " style="left:960px;top:580px;width:247px;height:7px;border:1px solid;border-color:#9d9ca3 #fff #fff #9d9ca3"></div>
<div class="a " style="left:961px;top:602px;width:115px;height:124px;border:1px solid #fff"></div>
<div class="a " style="left:960px;top:601px;width:115px;height:124px;border:1px solid #9a99a0"></div>
<div class="a " style="left:967px;top:596px;width:82px;height:12px;background:#e5dfe6"></div>
<div class="a t " style="left:968px;top:596px;letter-spacing:-0.3px">Outer dimensions:</div>
<div class="a " style="left:961px;top:738px;width:115px;height:62px;border:1px solid #fff"></div>
<div class="a " style="left:960px;top:737px;width:115px;height:62px;border:1px solid #9a99a0"></div>
<div class="a " style="left:967px;top:732px;width:87px;height:12px;background:#e5dfe6"></div>
<div class="a t " style="left:968px;top:732px;letter-spacing:-0.3px">Needed volume(s):</div>
<div class="a t " style="left:964px;top:620px;">W:</div>
<div class="a " style="left:996px;top:616px;width:49px;height:20px;background:#fff;border:1px solid;border-color:#8a898f #fff #fff #8a898f;box-shadow:inset 1px 1px 0 #505055;"><div class="t" style="padding:2px 0 0 2px">0,376</div></div>
<div class="a t " style="left:1048px;top:625px;">m</div>
<div class="a t " style="left:964px;top:640px;">H:</div>
<div class="a " style="left:996px;top:636px;width:49px;height:20px;background:#fff;border:1px solid;border-color:#8a898f #fff #fff #8a898f;box-shadow:inset 1px 1px 0 #505055;"><div class="t" style="padding:2px 0 0 2px">0,576</div></div>
<div class="a t " style="left:1048px;top:645px;">m</div>
<div class="a t " style="left:964px;top:660px;">D:</div>
<div class="a " style="left:996px;top:656px;width:49px;height:20px;background:#fff;border:1px solid;border-color:#8a898f #fff #fff #8a898f;box-shadow:inset 1px 1px 0 #505055;"><div class="t" style="padding:2px 0 0 2px">0,243</div></div>
<div class="a t " style="left:1048px;top:665px;">m</div>
<div class="a t " style="left:964px;top:757px;">Vb</div>
<div class="a " style="left:996px;top:753px;width:49px;height:20px;background:#fff;border:1px solid;border-color:#8a898f #fff #fff #8a898f;box-shadow:inset 1px 1px 0 #505055;"><div class="t" style="padding:2px 0 0 2px">35,2</div></div>
<div class="a t " style="left:1049px;top:762px;">l</div>
<div class="a " style="left:1168px;top:781px;width:41px;height:18px;background:#e5dfe6;border:1px solid;border-color:#fff #3c3c40 #3c3c40 #fff;box-shadow:inset -1px -1px 0 #9a99a0"></div>
<div class="a t" style="left:1168px;top:783px;width:41px;height:18px;line-height:17px;text-align:center">OK</div>
<div class="a " style="left:1081px;top:601px;width:125px;height:125px;background:#000"></div>
<svg class="a" style="left:1081px;top:601px" width="125" height="125" viewBox="0 0 125 125"><g fill="none" stroke-width="1" shape-rendering="crispEdges"><path d="M42.500 9.500h49v80h-49z" stroke="#8a8a8a"/></g><g fill="none" stroke-width="1"><path d="M30.500 21.500L42.500 9.500M79.500 21.500L91.500 9.500M79.500 101.500L91.500 89.500" stroke="#e8e8e8"/><path d="M30.500 101.500L42.500 89.500" stroke="#8a8a8a"/></g><g fill="none" stroke-width="1" shape-rendering="crispEdges"><path d="M30.500 21.500h49v80h-49z" stroke="#f4f4f4"/><path d="M91.500 9.500v80" stroke="#e8e8e8"/><path d="M42.500 9.500h49" stroke="#e8e8e8"/><path d="M25.500 21.500v80M23 21.500h5M23 101.500h5" stroke="#fff"/><path d="M30.500 106.500h49M30.500 104v5M79.500 104v5" stroke="#fff"/></g><path d="M96.500 106.500L108.500 94.500M94.500 104.500l4 4M106.500 92.500l4 4" stroke="#fff" fill="none"/><g font-family="Liberation Sans" font-weight="bold" font-size="16" fill="#fff" stroke="#fff" stroke-width="0.4"><text x="9.500" y="64.800" textLength="10.500" lengthAdjust="spacingAndGlyphs">H</text><text x="48" y="121.500" textLength="10.500" lengthAdjust="spacingAndGlyphs">W</text><text x="106" y="114.700" textLength="10" lengthAdjust="spacingAndGlyphs">D</text></g></svg>
<div class="a " style="left:0px;top:993px;width:1280px;height:31px;background:linear-gradient(#ffffff 0,#ffffff 1px,#7a7a94 1px,#7a7a94 2px,#fdfdff 2px,#fdfdff 5px,#a0a0bb 6px,#a9a9c3 9px,#bcbcd0 13px,#d2d2de 18px,#e3e2e8 22px,#eaeaf1 27px,#f2f2f7 29px,#7c7c94 30px,#5e5e78 31px)"></div>
<div class="a " style="left:0px;top:994px;width:99px;height:30px;background:radial-gradient(ellipse 40px 9px at 70px 16px,rgba(140,220,130,.45),rgba(140,220,130,0)),linear-gradient(#2a7e30 0,#7ed07a 2px,#5dbd5a 5px,#36a23b 11px,#2c9633 19px,#35a23c 25px,#1f7a27 29px,#145c1c 30px);border-radius:0 14px 14px 0/0 15px 15px 0;box-shadow:inset -2px 0 3px rgba(10,70,20,.55),1px 0 2px rgba(60,60,90,.5)"></div>
<svg class="a" style="left:10px;top:999px" width="19" height="19" viewBox="0 0 19 18"><path d="M3.500 1.500c2.500-1.200 4.500-1 6.500 0.200l-1.300 6c-2-1.200-4-1.300-6.500-0.200z" fill="#e8602c"/><path d="M11.300 2.200c2 1.200 4 1.300 6.500 0.200l-1.300 6c-2.500 1.100-4.500 1-6.500-0.200z" fill="#7cc242"/><path d="M2 8.700c2.500-1.100 4.500-1 6.500 0.200l-1.300 6c-2-1.200-4-1.300-6.500-0.200z" fill="#3a7ce0"/><path d="M9.800 9.400c2 1.200 4 1.300 6.500 0.200l-1.300 6c-2.500 1.100-4.500 1-6.500-0.200z" fill="#f6c02c"/></svg>
<div class="a t " style="left:35px;top:999px;font-size:17px;font-weight:bold;font-style:italic;color:#fbfdf0;line-height:20px;text-shadow:1px 1px 1px rgba(20,60,20,.7);letter-spacing:-0.2px">Start</div>
<div class="a " style="left:109px;top:997px;width:158px;height:24px;background:linear-gradient(#8e8ea4 0,#8e8ea4 1px,#ffffff 1px,#fbfbfe 8px,#ededf5 14px,#dcdcea 20px,#d2d2e2 22px,#8a8aa2 23px,#8a8aa2 24px);border-left:1px solid #f4f4fa;border-right:1px solid #9a9ab2;border-radius:3px"></div>
<div class="a t " style="left:137px;top:1003px;letter-spacing:-0.15px">2h11'00 Neostrada TP</div>
<div class="a " style="left:270px;top:997px;width:157px;height:24px;background:linear-gradient(#8e8ea4 0,#8e8ea4 1px,#ffffff 1px,#fbfbfe 8px,#ededf5 14px,#dcdcea 20px,#d2d2e2 22px,#8a8aa2 23px,#8a8aa2 24px);border-left:1px solid #f4f4fa;border-right:1px solid #9a9ab2;border-radius:3px"></div>
<div class="a t " style="left:297px;top:1003px;letter-spacing:-0.32px">STX SOUNDSTATION,...</div>
<div class="a " style="left:430px;top:997px;width:157px;height:24px;background:linear-gradient(#8e8ea4 0,#8e8ea4 1px,#ffffff 1px,#fbfbfe 8px,#ededf5 14px,#dcdcea 20px,#d2d2e2 22px,#8a8aa2 23px,#8a8aa2 24px);border-left:1px solid #f4f4fa;border-right:1px solid #9a9ab2;border-radius:3px"></div>
<div class="a t " style="left:457px;top:1003px;letter-spacing:-0.1px">Drivers</div>
<div class="a " style="left:589px;top:997px;width:158px;height:24px;background:linear-gradient(#555d70 0,#5f677a 3px,#6c7587 10px,#7b8494 18px,#858e9c 22px,#6a7282 24px);border:1px solid #4a5264;border-radius:3px"></div>
<div class="a t " style="left:618px;top:1003px;color:#fff">WinISD beta</div>
<div class="a " style="left:119px;top:1002px;width:15px;height:13px;background:#12127c;border-radius:2px;color:#fff;font-weight:bold;font-style:italic;font-size:9px;line-height:13px;text-align:center;letter-spacing:-0.5px">TP</div>
<svg class="a" style="left:277px;top:1000px" width="17" height="17" viewBox="0 0 17 17"><defs><linearGradient id="fg" x1="0.800" y1="0" x2="0.200" y2="1"><stop offset="0" stop-color="#f6a41e"/><stop offset="0.550" stop-color="#ee7a14"/><stop offset="1" stop-color="#b83a08"/></linearGradient></defs><circle cx="8.600" cy="8.600" r="7.600" fill="url(#fg)"/><circle cx="10" cy="6.600" r="4.500" fill="#2f74cc"/><path d="M8 3.200c1.500-0.800 3.500-0.600 4.500 0.600c-1 0-1.800 0.600-2 1.600c-0.300 1.200-1.500 1.800-2.500 1.200z" fill="#5aa8e8"/><path d="M1.600 5.200c0.600 0 1 0.300 1.300 0.800c0.700-1.300 1.900-2.300 3.300-2.700c-0.700 0.900-0.900 1.700-0.700 2.500c0.800-0.300 1.800 0 2.300 0.700c-0.900 0.200-1.500 0.800-1.500 1.600c0 1.300 1.300 2.200 2.800 2.200c1.700 0 3.100-1 3.700-2.400c0.300 2.900-1.700 5.400-4.800 5.400c-3.700 0-6.400-2.600-6.400-6.100z" fill="#e8700f"/><path d="M15.600 6.500a7.300 7.300 0 0 1-5.500 9.400" fill="none" stroke="#f8cc38" stroke-width="1.300"/></svg>
<svg class="a" style="left:437px;top:1001px" width="17" height="15" viewBox="0 0 17 15"><path d="M1.500 13.500v-10.500l1.500-1.500h4l1.500 2h6v3" fill="#f8e48c" stroke="#b89020" stroke-width="1"/><path d="M1.500 13.500l2-7.500h12l-2 7.500z" fill="#f4d458" stroke="#b89020" stroke-width="1"/></svg>
<svg class="a" style="left:599px;top:1002px" width="13.2" height="15.6" viewBox="0 0 11 13"><path d="M6 0H9.900V1.600H8.900V3.600L10.800 4.200V6.700L10 7.800H5L4.400 8.600V10.200L3.900 10.400V12L2.800 12.800H1.200L0 11.600L1.200 10.200V7.600L3.300 5.900H7.600V3.600H6.100Z" fill="#000"/></svg>
<div class="a " style="left:1187px;top:995px;width:93px;height:29px;background:linear-gradient(#ffffff 0,#fdfdff 5px,#f0f0f8 11px,#d8daec 18px,#bcc0dc 24px,#a4a8c8 27px,#7c7c98 28px,#60607a 29px);border-left:1px solid #62627c"></div>
<div class="a " style="left:1188px;top:993px;width:92px;height:2px;background:#fff"></div>
<div class="a " style="left:1130px;top:1002px;width:16px;height:15px;background:#b6b6c6"></div>
<div class="a t " style="left:1132px;top:1003px;">PL</div>
<svg class="a" style="left:1152px;top:1002px" width="17" height="14" viewBox="0 0 17 14"><path d="M4 3.500l1-1.500 1 1.500 1-1.500 1 1.500 1-1.500 1 1.500 1-1.500 1 1.500" stroke="#000" fill="none" stroke-width="0.900"/><rect x="0.700" y="4.200" width="15.600" height="8.600" rx="1.500" fill="#fff" stroke="#000" stroke-width="1.300"/><path d="M3 7h11M3 9.500h11" stroke="#333" stroke-width="1.200" stroke-dasharray="1 1"/></svg>
<svg class="a" style="left:1177px;top:999px" width="20" height="20" viewBox="0 0 20 20"><defs><linearGradient id="cg" x1="0" y1="0" x2="1" y2="1"><stop offset="0" stop-color="#b4b4c8"/><stop offset="1" stop-color="#7e7e9a"/></linearGradient></defs><circle cx="10" cy="10" r="8.600" fill="url(#cg)" stroke="#f4f4fa" stroke-width="1.400"/><path d="M12.300 5.500L7.300 10l5 4.500" fill="none" stroke="#fff" stroke-width="2.200" stroke-linejoin="miter"/></svg>
<svg class="a" style="left:1198px;top:1000px" width="16" height="17" viewBox="0 0 16 17"><g stroke="#d42c30" stroke-width="1.700" stroke-linecap="round"><path d="M7 1.300V4M2.600 3.300L4.600 5.400M11.600 3.300L9.600 5.400M1 8.900L2.800 8.500"/></g><circle cx="6.900" cy="8" r="4.200" fill="#f6cc22"/><path d="M3 6.200a4.200 4.200 0 0 1 7.800 0z" fill="#f0982a"/><circle cx="6.300" cy="7.600" r="0.650" fill="#201408"/><circle cx="8.500" cy="7.600" r="0.650" fill="#201408"/><path d="M2.300 10.800h6.600v4.300q-3.300 1.200-6.600 0z" fill="#36a6e6"/><path d="M2.600 10.300h6v1.200h-6z" fill="#62c066"/><path d="M9.300 9.800h1.800v5.700h-2.200z" fill="#1e4690"/><circle cx="10.400" cy="8.600" r="1" fill="#345cae"/><path d="M11.300 10h3.200v5.500h-3.200z" fill="#b4d4f2"/><circle cx="13.600" cy="9" r="0.900" fill="#a08848"/></svg>
<svg class="a" style="left:1217px;top:1000px" width="15" height="18" viewBox="0 0 15 18"><rect x="6.500" y="7" width="6" height="3" fill="#e4e4f6"/><rect x="6" y="9.300" width="7" height="2" rx="0.800" fill="#8088b4"/><rect x="6.200" y="1.500" width="7.600" height="5.700" rx="0.600" fill="#262e7a"/><rect x="7.300" y="2.400" width="5.400" height="3.600" fill="#323c92"/><rect x="1.300" y="10.300" width="5.400" height="2.600" fill="#eeeefa"/><rect x="0.800" y="12.500" width="6.600" height="2.200" rx="0.800" fill="#7078a8"/><rect x="0.800" y="4.900" width="6.600" height="5.600" rx="0.600" fill="#262e7c"/><rect x="1.800" y="5.800" width="4.600" height="3.600" fill="#343e96"/></svg>
<div class="a t " style="left:1239px;top:1003px;letter-spacing:0.25px">11:10</div>
</div></body></html>
